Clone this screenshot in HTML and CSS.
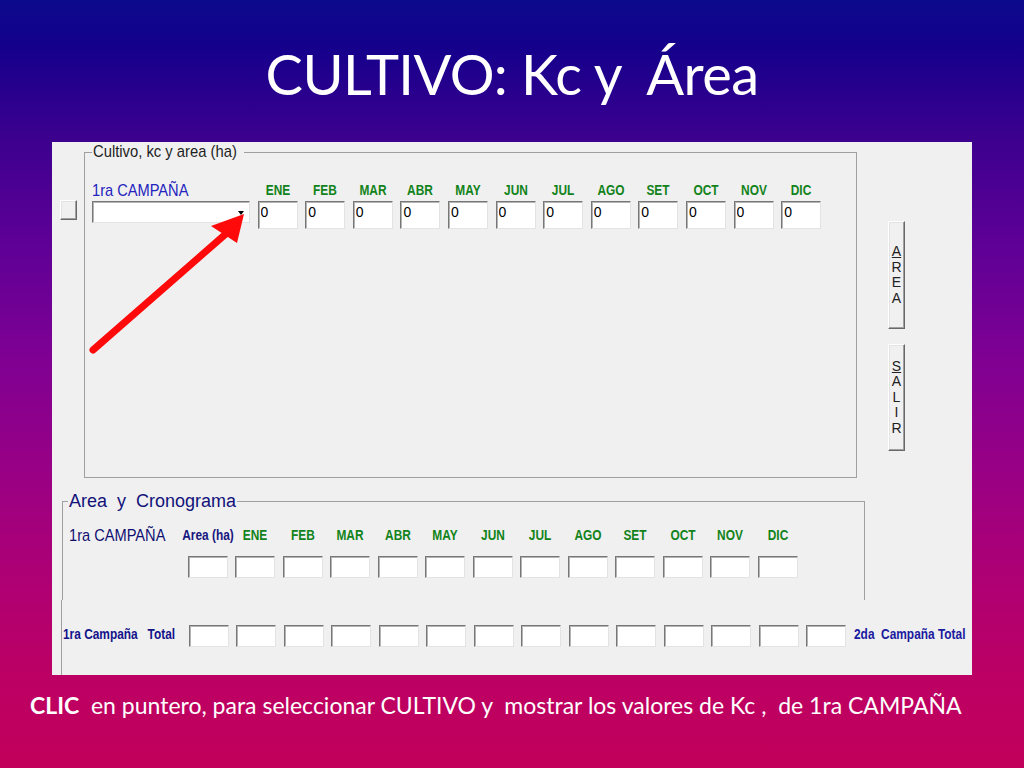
FILE: index.html
```html
<!DOCTYPE html>
<html lang="es">
<head>
    <meta charset="UTF-8">
    <meta name="viewport" content="width=device-width, initial-scale=1.0">
    <title>CULTIVO: Kc y Área</title>
    <link rel="stylesheet" href="styles.css">
</head>
<body>
    <h1 class="title">CULTIVO: Kc y&nbsp; Área</h1>

    <div class="panel">
        <div class="panel-top">
            <div class="side">
                <button class="btn tiny"></button>
            </div>

            <fieldset class="group kc">
                <legend><span>Cultivo, kc y area (ha)</span></legend>
                <div class="kc-grid">
                    <span class="campaign">1ra CAMPAÑA</span>
                    <span class="month">ENE</span>
                    <span class="month">FEB</span>
                    <span class="month">MAR</span>
                    <span class="month">ABR</span>
                    <span class="month">MAY</span>
                    <span class="month">JUN</span>
                    <span class="month">JUL</span>
                    <span class="month">AGO</span>
                    <span class="month">SET</span>
                    <span class="month">OCT</span>
                    <span class="month">NOV</span>
                    <span class="month">DIC</span>

                    <div class="combo"><span class="drop"></span></div>
                    <input class="field" type="text" value="0">
                    <input class="field" type="text" value="0">
                    <input class="field" type="text" value="0">
                    <input class="field" type="text" value="0">
                    <input class="field" type="text" value="0">
                    <input class="field" type="text" value="0">
                    <input class="field" type="text" value="0">
                    <input class="field" type="text" value="0">
                    <input class="field" type="text" value="0">
                    <input class="field" type="text" value="0">
                    <input class="field" type="text" value="0">
                    <input class="field" type="text" value="0">
                </div>
            </fieldset>

            <div class="actions">
                <button class="btn vbtn"><u>A</u><br>R<br>E<br>A</button>
                <button class="btn vbtn salir"><u>S</u><br>A<br>L<br>I<br>R</button>
            </div>
        </div>

        <fieldset class="group crono">
            <legend>Area&nbsp; y&nbsp; Cronograma</legend>
            <div class="crono-grid">
                <span class="campaign dark">1ra CAMPAÑA</span>
                <span class="month navy">Area (ha)</span>
                <span class="month">ENE</span>
                <span class="month">FEB</span>
                <span class="month">MAR</span>
                <span class="month">ABR</span>
                <span class="month">MAY</span>
                <span class="month">JUN</span>
                <span class="month">JUL</span>
                <span class="month">AGO</span>
                <span class="month">SET</span>
                <span class="month">OCT</span>
                <span class="month">NOV</span>
                <span class="month">DIC</span>

                <span></span>
                <input class="field small" type="text">
                <input class="field small" type="text">
                <input class="field small" type="text">
                <input class="field small" type="text">
                <input class="field small" type="text">
                <input class="field small" type="text">
                <input class="field small" type="text">
                <input class="field small" type="text">
                <input class="field small" type="text">
                <input class="field small" type="text">
                <input class="field small" type="text">
                <input class="field small" type="text">
                <input class="field small" type="text">
            </div>
        </fieldset>

        <div class="totals">
            <span class="total-label first">1ra Campaña&nbsp;&nbsp; Total</span>
            <input class="field small" type="text">
            <input class="field small" type="text">
            <input class="field small" type="text">
            <input class="field small" type="text">
            <input class="field small" type="text">
            <input class="field small" type="text">
            <input class="field small" type="text">
            <input class="field small" type="text">
            <input class="field small" type="text">
            <input class="field small" type="text">
            <input class="field small" type="text">
            <input class="field small" type="text">
            <input class="field small" type="text">
            <input class="field small" type="text">
            <span class="total-label">2da&nbsp; Campaña Total</span>
        </div>
    </div>

    <p class="caption"><b>CLIC</b>&nbsp; en puntero, para seleccionar CULTIVO y&nbsp; mostrar los valores de Kc ,&nbsp; de 1ra CAMPAÑA</p>

    <!-- red pointer drawn over the form -->
    <svg class="pointer" width="1024" height="768" viewBox="0 0 1024 768">
        <line x1="93" y1="350" x2="228" y2="232" stroke="#fe0a0a" stroke-width="7" stroke-linecap="round"/>
        <polygon points="244,214 211,226 237,243" fill="#fe0a0a"/>
    </svg>
</body>
</html>
```

FILE: styles.css
```css
body {
    margin: 0;
    width: 1024px;
    height: 768px;
    position: relative;
    overflow: hidden;
    background: linear-gradient(to bottom, #0c0a8c 0%, #14008c 6%, #3c008e 18%, #5a0096 30%, #7c0094 45%, #9a0084 62%, #ae0074 75%, #bc0064 88%, #c2005a 100%);
    font-family: "Liberation Sans", Arial, sans-serif;
}

.title {
    margin: 39px 0 0;
    height: 70px;
    line-height: 70px;
    text-align: center;
    font-family: Lato, "Open Sans", sans-serif;
    font-size: 56px;
    font-weight: normal;
    letter-spacing: -0.6px;
    color: #fff;
}

.panel {
    margin: 33px 0 0 52px;
    width: 920px;
    height: 533px;
    padding-top: 2px;
    box-sizing: border-box;
    background-color: #f0f0f0;
}

.panel-top {
    display: flex;
    align-items: flex-start;
}

.side {
    width: 17px;
    margin: 56px 7px 0 8px;
}

/* windows-like controls */
.btn {
    box-sizing: border-box;
    padding: 0;
    background-color: #f0f0f0;
    border: 1px solid;
    border-color: #fff #696969 #696969 #fff;
    box-shadow: inset -1px -1px 0 #a0a0a0, inset 1px 1px 0 #e3e3e3;
    font-family: "Liberation Sans", Arial, sans-serif;
    color: #222;
}

.tiny {
    display: block;
    width: 17px;
    height: 20px;
}

.field {
    box-sizing: border-box;
    width: 40px;
    height: 28px;
    margin: 0;
    padding: 2px 0 8px 2px;
    border: 1px solid;
    border-color: #777 #e3e3e3 #e3e3e3 #777;
    box-shadow: inset 1px 1px 0 #b4b4b4;
    background-color: #fff;
    font-family: "Liberation Sans", Arial, sans-serif;
    font-size: 14px;
    color: #000;
    outline: none;
}

.field.small {
    height: 22px;
    padding: 0;
}

.group {
    margin: 0;
    padding: 0;
    min-width: 0;
    box-sizing: border-box;
    border: 1px solid #a0a0a0;
}

.group legend {
    padding: 0 1px;
    white-space: nowrap;
}

.kc {
    width: 773px;
    height: 334px;
}

.kc legend {
    width: 150px;
    margin-left: 7px;
    font-size: 17px;
    line-height: 16px;
    color: #1e1e1e;
}

.kc legend span {
    display: inline-block;
    transform: scaleX(0.87);
    transform-origin: left center;
}

.kc-grid {
    display: grid;
    grid-template-columns: 158px repeat(12, 40px);
    grid-template-rows: 18px 28px;
    column-gap: 7.6px;
    row-gap: 1px;
    padding: 22px 0 0 7px;
}

.campaign {
    font-size: 17px;
    line-height: 18px;
    color: #2323bd;
    white-space: nowrap;
    transform: scaleX(0.86);
    transform-origin: left center;
}

.campaign.dark {
    color: #0f0f72;
}

/* narrow bold labels */
.month {
    display: flex;
    justify-content: center;
    align-self: start;
    white-space: nowrap;
    font-size: 14.5px;
    font-weight: bold;
    line-height: 16px;
    color: #12831a;
    transform: scaleX(0.82);
}

.month.navy {
    color: #16167e;
}

.combo {
    box-sizing: border-box;
    height: 22px;
    display: flex;
    justify-content: flex-end;
    align-items: center;
    padding: 2px 5px 0 0;
    border: 1px solid;
    border-color: #777 #e3e3e3 #e3e3e3 #777;
    box-shadow: inset 1px 1px 0 #b4b4b4;
    background-color: #fff;
}

.drop {
    width: 0;
    height: 0;
    border-left: 3.5px solid transparent;
    border-right: 3.5px solid transparent;
    border-top: 4px solid #000;
}

.actions {
    display: flex;
    flex-direction: column;
    gap: 15px;
    margin: 77px 0 0 31px;
}

.vbtn {
    width: 17px;
    height: 108px;
    font-size: 14px;
    line-height: 15.5px;
}

.vbtn.salir {
    height: 107px;
}

.crono {
    width: 803px;
    height: 109px;
    margin: 13px 0 0 10px;
    border-bottom: none;
}

.crono legend {
    margin-left: 5px;
    font-size: 18px;
    line-height: 20px;
    color: #12127a;
}

.crono-grid {
    display: grid;
    grid-template-columns: 111px repeat(13, 40px);
    grid-template-rows: 18px 22px;
    column-gap: 7.5px;
    row-gap: 11px;
    padding: 16px 0 0 6px;
}

.totals {
    display: flex;
    align-items: flex-start;
    gap: 7.5px;
    height: 75px;
    margin-left: 9px;
    padding-top: 25px;
    box-sizing: border-box;
    border-left: 1px solid #a0a0a0;
}

.total-label {
    margin-top: 1px;
    white-space: nowrap;
    font-size: 14.5px;
    font-weight: bold;
    line-height: 16px;
    color: #1a1a9e;
    transform: scaleX(0.82);
    transform-origin: left center;
}

.total-label.first {
    width: 118px;
    margin-left: 1px;
    color: #13138a;
}

.caption {
    margin: 17px 0 0;
    padding-left: 30px;
    font-family: Lato, "Open Sans", sans-serif;
    font-size: 23px;
    line-height: 26px;
    color: #fff;
    white-space: nowrap;
}

.pointer {
    position: absolute;
    top: 0;
    left: 0;
    pointer-events: none;
}
```
